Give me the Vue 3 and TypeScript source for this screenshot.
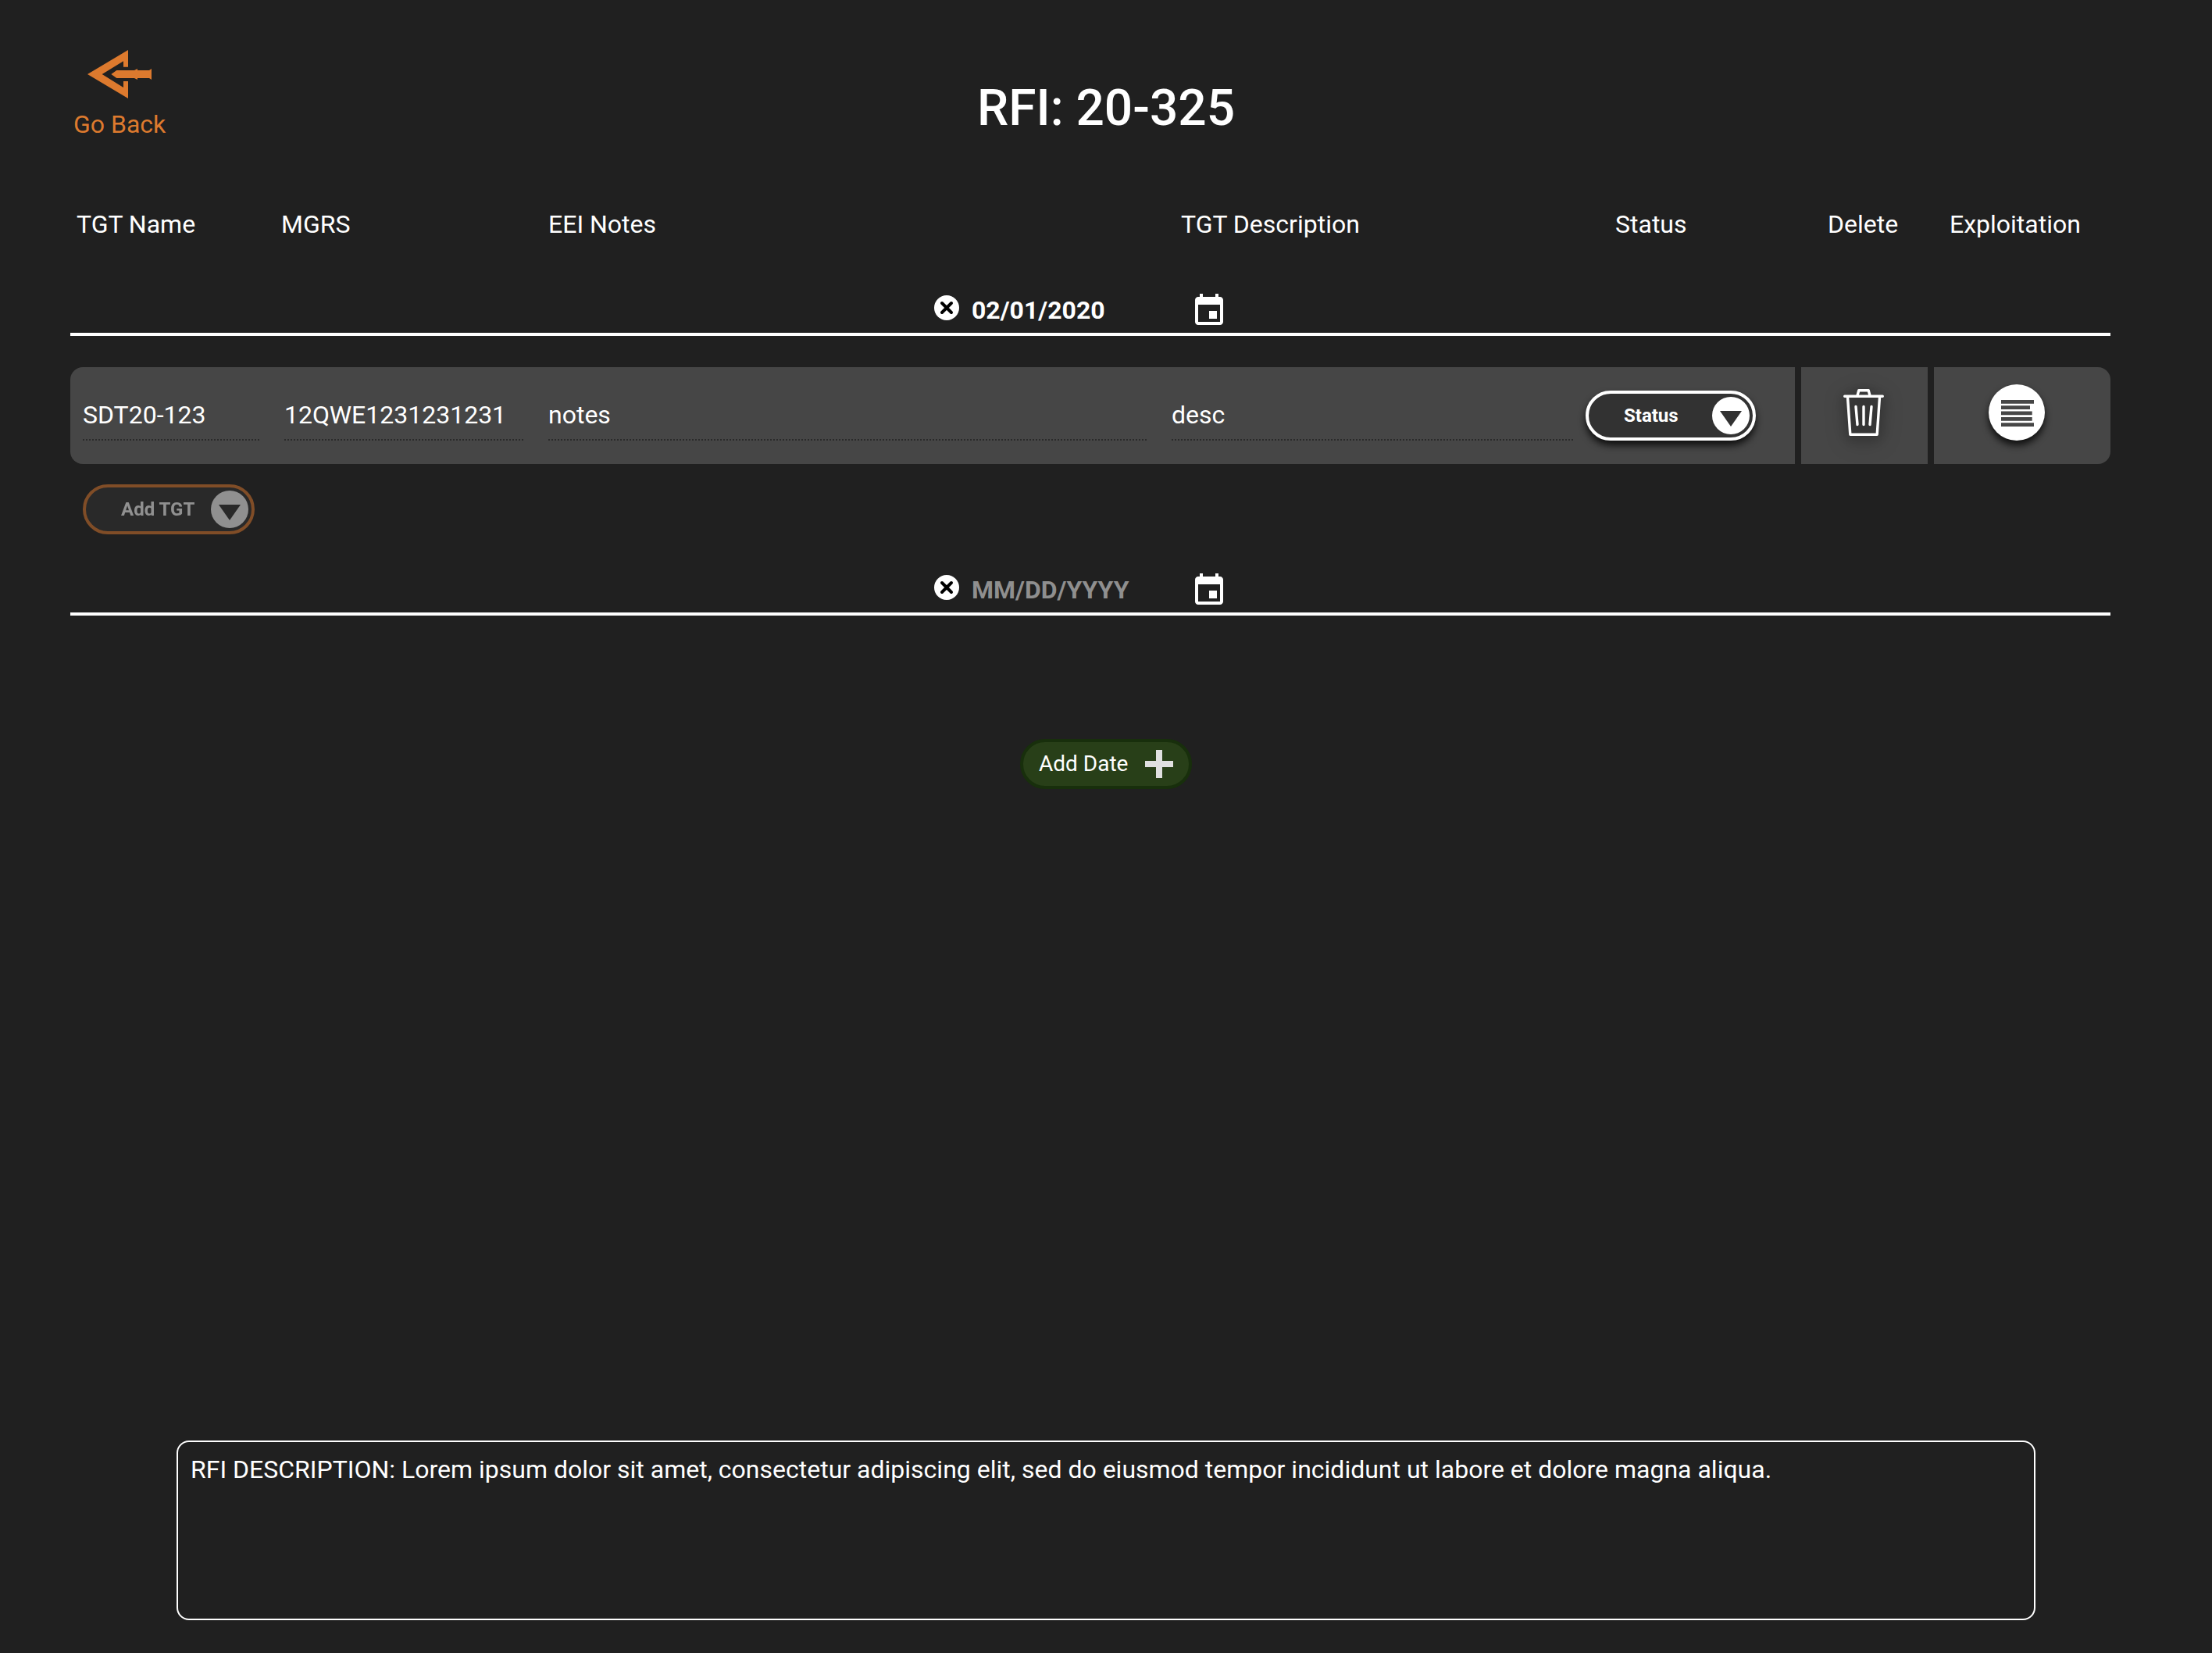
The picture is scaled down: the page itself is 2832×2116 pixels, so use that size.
<script setup lang="ts">
import { reactive } from 'vue'

interface Target {
  id: number
  name: string
  mgrs: string
  notes: string
  description: string
}

interface DateGroup {
  id: number
  date: string
  targets: Target[]
}

const columns: string[] = ['TGT Name', 'MGRS', 'EEI Notes', 'TGT Description', 'Status', 'Delete', 'Exploitation']

const groups = reactive<DateGroup[]>([
  {
    id: 1,
    date: '02/01/2020',
    targets: [{ id: 1, name: 'SDT20-123', mgrs: '12QWE1231231231', notes: 'notes', description: 'desc' }],
  },
  { id: 2, date: '', targets: [] },
])

function clearDate(group: DateGroup): void {
  group.date = ''
}

function removeTarget(group: DateGroup, id: number): void {
  group.targets = group.targets.filter((target) => target.id !== id)
}

function addDate(): void {
  groups.push({ id: groups.length + 1, date: '', targets: [] })
}
</script>

<template>
  <main class="page">
    <header class="topbar">
      <a class="back" href="#">
        <svg class="back-icon" viewBox="96 42 246 186" aria-hidden="true">
          <path d="M96 135 252 42v65h-18V85l-82 50 82 51v-24h18v66z" />
          <path d="M187 135 208 120h68l12-6v6h45l9-6v42l-9-6h-45v6l-12-6h-68z" />
        </svg>
        <span>Go Back</span>
      </a>
      <h1 class="title">RFI: 20-325</h1>
    </header>

    <table class="targets">
      <thead>
        <tr class="head-row">
          <th v-for="column in columns" :key="column" scope="col">{{ column }}</th>
        </tr>
      </thead>
      <tbody v-for="group in groups" :key="group.id" class="group">
        <tr class="date-row">
          <td class="date-cell" :colspan="columns.length">
            <div class="date-field">
              <button class="clear" type="button" aria-label="Clear date" @click="clearDate(group)">
                <svg viewBox="0 0 32 32" aria-hidden="true">
                  <circle cx="16" cy="16" r="16" fill="#fff" />
                  <path d="M10 10 22 22M22 10 10 22" stroke="#000" stroke-width="4" stroke-linecap="round" />
                </svg>
              </button>
              <input v-model="group.date" class="date-input" type="text" placeholder="MM/DD/YYYY" aria-label="Date" />
              <button class="calendar" type="button" aria-label="Choose date">
                <svg viewBox="0 0 24 24" aria-hidden="true">
                  <path
                    fill="#fff"
                    d="M17 12h-5v5h5v-5zM16 1v2H8V1H6v2H5c-1.110 0-1.990.9-1.990 2L3 19c0 1.100.890 2 2 2h14c1.100 0 2-.9 2-2V5c0-1.100-.9-2-2-2h-1V1h-2zm3 18H5V8h14v11z"
                  />
                </svg>
              </button>
            </div>
          </td>
        </tr>
        <tr v-for="target in group.targets" :key="target.id" class="target-row">
          <td class="field"><input v-model="target.name" type="text" aria-label="TGT Name" /></td>
          <td class="field"><input v-model="target.mgrs" type="text" aria-label="MGRS" /></td>
          <td class="field"><input v-model="target.notes" type="text" aria-label="EEI Notes" /></td>
          <td class="field"><input v-model="target.description" type="text" aria-label="TGT Description" /></td>
          <td class="status">
            <button class="pill" type="button" aria-haspopup="listbox">
              <span>Status</span>
              <svg viewBox="0 0 48 48" aria-hidden="true">
                <circle cx="24" cy="24" r="24" fill="#fff" />
                <path d="M10 18h28L24 38z" fill="#323232" />
              </svg>
            </button>
          </td>
          <td class="action">
            <button class="trash" type="button" aria-label="Delete" @click="removeTarget(group, target.id)">
              <svg viewBox="0 0 52 60" aria-hidden="true">
                <g fill="none" stroke="#fff" stroke-width="3.400" stroke-linecap="round" stroke-linejoin="round">
                  <path d="M1.700 9.300h48.600M17.800 9l2-7.300h12.400l2 7.300" />
                  <path d="M5.500 10.500 8.800 58.200h34.400l3.300-47.700" />
                  <path d="M16 22.500l2 23M26 22.500v23M36 22.500l-2 23" />
                </g>
              </svg>
            </button>
          </td>
          <td class="action exploitation">
            <button class="report" type="button" aria-label="Exploitation">
              <svg viewBox="0 0 72 72" aria-hidden="true">
                <path
                  fill="#464646"
                  d="M16 20h42v4.700H16zM16 27.300h37v4.700H16zM16 34.600h39.700v4.700H16zM16 42h39.700v4.700H16zM16 49.300h42v4.700H16z"
                />
              </svg>
            </button>
          </td>
        </tr>
        <tr v-if="group.targets.length" class="add-row">
          <td :colspan="columns.length">
            <button class="pill add" type="button" disabled>
              <span>Add TGT</span>
              <svg viewBox="0 0 48 48" aria-hidden="true">
                <circle cx="24" cy="24" r="24" fill="#fff" />
                <path d="M10 18h28L24 38z" fill="#323232" />
              </svg>
            </button>
          </td>
        </tr>
      </tbody>
    </table>

    <button class="add-date" type="button" @click="addDate">
      <span>Add Date</span>
      <svg viewBox="0 0 36 36" aria-hidden="true">
        <path d="M14 0h8v14h14v8H22v14h-8V22H0v-8h14z" fill="#e0e0e0" />
      </svg>
    </button>

    <p class="description">
      RFI DESCRIPTION: Lorem ipsum dolor sit amet, consectetur adipiscing elit, sed do eiusmod tempor incididunt ut
      labore et dolore magna aliqua.
    </p>
  </main>
</template>

<style>
body {
  margin: 0;
  background: #202020;
}
</style>

<style scoped>
.page {
  display: flex;
  flex-direction: column;
  box-sizing: border-box;
  min-height: 100vh;
  padding: 64px 0 42px;
  color: #fff;
  font-family: Roboto, sans-serif;
  font-size: 32px;
  line-height: 40px;
}

button,
input {
  box-sizing: border-box;
  margin: 0;
  padding: 0;
  border: 0;
  background: none;
  color: inherit;
  font: inherit;
}

svg {
  display: block;
}

.topbar {
  display: grid;
  grid-template-columns: 1fr auto 1fr;
  align-items: end;
  padding: 0 94px;
}

.back {
  display: flex;
  flex-direction: column;
  align-items: center;
  justify-self: start;
  gap: 13px;
  color: #dd7a2e;
  text-decoration: none;
}

.back-icon {
  width: 82px;
  height: 62px;
  fill: currentColor;
}

.title {
  margin: 0;
  font-size: 64px;
  font-weight: 500;
  line-height: 80px;
}

.targets {
  display: block;
  margin: 88px 130px 0 90px;
}

.targets thead,
.group {
  display: block;
}

.targets td,
.targets th {
  padding: 0;
}

.head-row {
  display: grid;
  grid-template-columns: 262px 342px 810fr 556fr 272px 156px 206px;
  padding-left: 8px;
  margin-bottom: 67px;
}

.head-row th {
  font-weight: 400;
  text-align: left;
}

.group + .group {
  margin-top: 48px;
}

.date-row,
.add-row {
  display: block;
}

.targets .date-cell {
  display: flex;
  justify-content: center;
  padding-bottom: 4px;
  border-bottom: 4px solid #fff;
}

.date-field {
  display: flex;
  gap: 10px;
  padding-right: 28px;
}

.clear {
  width: 40px;
  height: 40px;
  padding: 4px;
}

.date-input {
  width: 272px;
  height: 48px;
  padding: 0 2px 2px;
  font-weight: 700;
}

.date-input::placeholder {
  color: #8f8f8f;
  opacity: 1;
}

.calendar {
  width: 48px;
  height: 48px;
}

.target-row {
  display: grid;
  grid-template-columns: 258px 338px 798fr 546fr 268px 170px 234px;
  height: 124px;
  margin-top: 40px;
}

.target-row td {
  display: flex;
  align-items: center;
  background: #464646;
}

.target-row td:first-child {
  border-radius: 16px 0 0 16px;
}

.target-row .field {
  padding: 0 16px;
}

.field input {
  width: 100%;
  height: 64px;
  border-bottom: 2px dotted #2a2a2a;
}

.target-row .action {
  justify-content: center;
  margin-left: 8px;
  padding: 0 2px 8px 0;
}

.target-row .exploitation {
  padding-right: 14px;
  border-radius: 0 16px 16px 0;
}

.pill {
  display: flex;
  align-items: center;
  justify-content: space-between;
  width: 218px;
  height: 64px;
  padding: 0 4px 0 45px;
  border: 4px solid #fff;
  border-radius: 32px;
  background: #323232;
  box-shadow: 0 6px 10px rgba(0, 0, 0, 0.8);
  font-size: 24px;
  font-weight: 700;
}

.pill svg {
  width: 48px;
  height: 48px;
}

.add-row {
  margin-top: 26px;
  padding-left: 16px;
}

.add-row td {
  display: block;
}

.add {
  width: 220px;
  border-color: #e07a2e;
  box-shadow: none;
  opacity: 0.5;
}

.trash {
  width: 52px;
  height: 60px;
  filter: drop-shadow(0 4px 8px rgba(0, 0, 0, 0.5)) drop-shadow(0 4px 12px rgba(0, 0, 0, 0.3));
}

.report {
  width: 72px;
  height: 72px;
  border-radius: 50%;
  background: #fff;
  box-shadow: 0 6px 10px rgba(0, 0, 0, 0.8);
}

.add-date {
  display: flex;
  align-items: center;
  align-self: center;
  justify-content: space-between;
  width: 220px;
  height: 64px;
  margin: 158px 0 40px;
  padding: 0 20px;
  border: 4px solid #182f0c;
  border-radius: 32px;
  background: #283f18;
  font-size: 28px;
}

.add-date svg {
  width: 36px;
  height: 36px;
}

.description {
  box-sizing: border-box;
  min-height: 230px;
  margin: auto 226px 0;
  padding: 15px 16px;
  border: 2px solid #fff;
  border-radius: 16px;
}
</style>
